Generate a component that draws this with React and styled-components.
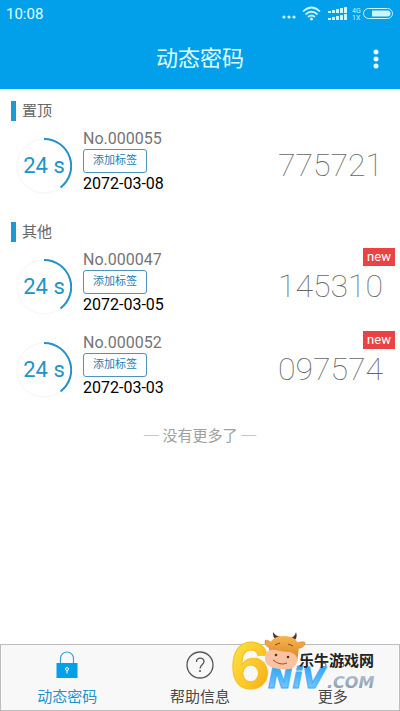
import React from "react"
import styled, { createGlobalStyle } from "styled-components"

const GlobalStyle = createGlobalStyle`
    * {
        box-sizing: border-box;
    }

    body {
        margin: 0;
        background: #fff;
        font-family: Roboto, "Noto Sans CJK SC", sans-serif;
    }

    button {
        font-family: inherit;
        cursor: pointer;
    }
`

const Page = styled.div`
    min-height: 100vh;
    display: flex;
    flex-direction: column;
`

const Header = styled.header`
    background: #029fea;
    color: #e4ffff;
`

const StatusBar = styled.div`
    height: 28px;
    padding: 0 6px;
    display: flex;
    align-items: center;
    justify-content: space-between;
    font-size: 15px;
`

const StatusIcons = styled.svg`
    display: block;
    width: 112px;
    height: 20px;
`

const TitleBar = styled.div`
    height: 61px;
    padding: 0 10px;
    display: grid;
    grid-template-columns: 28px 1fr 28px;
    align-items: center;
`

const ScreenTitle = styled.h1`
    grid-column: 2;
    margin: 0;
    text-align: center;
    font-size: 22px;
    font-weight: 400;
    line-height: 32px;
`

const MenuButton = styled.button`
    height: 32px;
    padding: 0;
    border: 0;
    background: none;
    color: inherit;

    svg {
        display: block;
        margin: 0 auto;
    }
`

const Content = styled.main`
    flex: 1;
`

const SectionTitle = styled.h2`
    margin: 0;
    padding: 12px 11px 4px;
    display: flex;
    align-items: center;
    gap: 6px;
    color: #666;
    font-size: 15px;
    font-weight: 400;
    line-height: 20px;

    &::before {
        content: "";
        width: 5px;
        height: 20px;
        background: #1f97cf;
    }
`

const TokenList = styled.ul`
    margin: 0 0 2px;
    padding: 0;
    list-style: none;
`

const TokenRow = styled.li`
    position: relative;
    height: 83px;
    padding: 0 17px 2px 16px;
    display: flex;
    align-items: center;
    gap: 11px;
`

const Timer = styled.div`
    width: 56px;
    height: 56px;
    display: grid;
    place-items: center;
    color: #2393c6;
    font-size: 22px;
    line-height: 28px;
    white-space: nowrap;

    > * {
        grid-area: 1 / 1;
    }
`

const Details = styled.div`
    flex: 1;
    display: flex;
    flex-direction: column;
    align-items: flex-start;
    padding-bottom: 7px;
`

const Serial = styled.span`
    color: #757575;
    font-size: 16px;
    line-height: 20px;
`

const TagButton = styled.button`
    width: 64px;
    height: 24px;
    padding: 0;
    border: 1px solid #4e93bb;
    border-radius: 3px;
    background: #fff;
    color: #1c7eb4;
    font-size: 11px;
    line-height: 20px;
`

const ExpireDate = styled.time`
    color: #000;
    font-size: 16px;
    line-height: 22px;
`

const Code = styled.output`
    padding-bottom: 2px;
    color: #666;
    font-size: 32px;
    font-weight: 100;
    line-height: 36px;
`

const NewBadge = styled.span`
    position: absolute;
    top: 2px;
    right: 5px;
    width: 32px;
    height: 18px;
    background: #ea4344;
    color: #fff;
    font-size: 13px;
    line-height: 18px;
    text-align: center;
`

const EndNote = styled.p`
    margin: 12px 0;
    color: #a0a0a0;
    font-size: 15px;
    line-height: 24px;
    text-align: center;
`

const TabBar = styled.nav`
    position: relative;
    height: 67px;
    display: grid;
    grid-template-columns: repeat(3, 1fr);
    border: 1px solid #bdbdbd;
    background: #f8f8f8;
`

const Tab = styled.button`
    padding: 5px 0 0;
    border: 0;
    background: none;
    display: flex;
    flex-direction: column;
    align-items: center;
    gap: 5px;
    color: ${({ $active }) => ($active ? "#1f95c9" : "#4a4a4a")};
    font-size: 15px;
    line-height: 24px;
`

const SiteLogo = styled.svg`
    position: absolute;
    right: 20px;
    bottom: 16px;
    width: 146px;
    height: 64px;
    overflow: visible;
    pointer-events: none;
`

const pinned = [{ serial: "No.000055", date: "2072-03-08", code: "775721" }]

const others = [
    { serial: "No.000047", date: "2072-03-05", code: "145310", isNew: true },
    { serial: "No.000052", date: "2072-03-03", code: "097574", isNew: true },
]

const SignalBars = ({ y }) => (
    <g>
        {[2, 3, 4, 5, 6].map((h, i) => (
            <rect key={h} x={46 + i * 4} y={y - h} width="3" height={h} />
        ))}
    </g>
)

const Status = () => (
    <StatusIcons viewBox="0 0 112 20" fill="#c9f6ff" aria-hidden="true">
        <circle cx="2" cy="13" r="1.6" />
        <circle cx="7" cy="13" r="1.6" />
        <circle cx="12" cy="13" r="1.6" />
        <g fill="none" stroke="#c9f6ff" strokeWidth="1.7">
            <path d="M21 7.500q8.500-8 17 0" />
            <path d="M23.500 10.500q6-5.500 12 0" />
            <path d="M26 13q3.500-3 7 0" />
        </g>
        <circle cx="29.500" cy="15" r="1.500" />
        <SignalBars y={9} />
        <SignalBars y={16} />
        <text x="70" y="9" fontSize="7">4G</text>
        <text x="70" y="16" fontSize="7">1X</text>
        <rect x="81.500" y="4.500" width="29" height="10" rx="5" fill="none" stroke="#c9f6ff" />
        <path d="M90 6.500h15.500a3 3 0 0 1 0 6H90z" />
    </StatusIcons>
)

const Token = ({ serial, date, code, isNew }) => (
    <TokenRow>
        <Timer>
            <svg width="56" height="56" viewBox="0 0 56 56" fill="none" aria-hidden="true">
                <circle cx="28" cy="28" r="27" stroke="#f5f5f5" />
                <path d="M28 1A27 27 0 0 1 44.500 49.500" stroke="#2393c6" strokeWidth="2" />
            </svg>
            <span>24 s</span>
        </Timer>
        <Details>
            <Serial>{serial}</Serial>
            <TagButton type="button">添加标签</TagButton>
            <ExpireDate>{date}</ExpireDate>
        </Details>
        <Code>{code}</Code>
        {isNew && <NewBadge>new</NewBadge>}
    </TokenRow>
)

const LockIcon = () => (
    <svg width="28" height="30" viewBox="0 0 28 30" aria-hidden="true">
        <path d="M7.500 14V8.500a6.500 6.500 0 0 1 13 0V14" fill="none" stroke="#3fa3d0" strokeWidth="1.200" />
        <rect x="3.500" y="13" width="21" height="15" fill="#029fea" />
        <circle cx="14" cy="19" r="1.500" fill="none" stroke="#fff" />
        <path d="M14 20.500v3" stroke="#fff" />
    </svg>
)

const HelpIcon = () => (
    <svg width="28" height="30" viewBox="0 0 28 30" fill="none" stroke="#555" strokeWidth="1.300" aria-hidden="true">
        <circle cx="14" cy="15" r="13" />
        <path d="M10.500 12c0-5 7.500-5 7.500-.5 0 3-4 3.500-4 7" />
        <path d="M14 20v2" strokeWidth="1.600" />
    </svg>
)

const MoreIcon = () => (
    <svg width="28" height="30" viewBox="0 0 28 30" fill="none" stroke="#555" aria-hidden="true">
        <circle cx="5" cy="15" r="2" />
        <circle cx="14" cy="15" r="2" />
        <circle cx="23" cy="15" r="2" />
    </svg>
)

const Logo = () => (
    <SiteLogo viewBox="0 0 146 64">
        <defs>
            <linearGradient id="gold" x1="0" y1="0" x2="1" y2="1">
                <stop offset="0" stopColor="#ffe94b" />
                <stop offset="0.6" stopColor="#fcc525" />
                <stop offset="1" stopColor="#e9a00f" />
            </linearGradient>
            <linearGradient id="sky" x1="0" y1="0" x2="0" y2="1">
                <stop offset="0" stopColor="#1d9ff5" />
                <stop offset="1" stopColor="#8ad0fc" />
            </linearGradient>
            <linearGradient id="steel" x1="0" y1="0" x2="0" y2="1">
                <stop offset="0" stopColor="#b5c4d1" />
                <stop offset="1" stopColor="#8396a6" />
            </linearGradient>
            <linearGradient id="hide" x1="0" y1="0" x2="0" y2="1">
                <stop offset="0" stopColor="#f5b652" />
                <stop offset="1" stopColor="#d98020" />
            </linearGradient>
        </defs>
        <text x="-3" y="58" fontFamily="Inter, sans-serif" fontWeight="700" fontSize="62" fill="url(#gold)" stroke="#f6bf25">6</text>
        <text x="35" y="58" fontFamily="DejaVu Sans, sans-serif" fontWeight="700" fontStyle="italic" fontSize="29" fill="url(#sky)" stroke="#41adf4">NiV</text>
        <text x="94" y="58" fontFamily="DejaVu Sans, sans-serif" fontWeight="700" fontStyle="italic" fontSize="16" fill="url(#steel)">.COM</text>
        <text x="66" y="36" fontFamily="Noto Sans CJK SC, sans-serif" fontWeight="700" fontSize="15" fill="#222">乐牛游戏网</text>
        <g>
            <path d="M44 10q-5-3-4-8 2 4 8 5zM57 8q5-1 6-6 2 6-2 9z" fill="#5a3023" />
            <path d="M39 13q-8-6-7 0 1 5 8 5zM64 13q9-3 8 1-2 5-8 4z" fill="#efa343" stroke="#c77a28" strokeWidth=".5" />
            <path d="M36 18q1-12 15-12t15 12l-2 14H36z" fill="url(#hide)" />
            <path d="M32 29q0-11 10-9 8 2 15 2 8 2 7 10-2 9-16 7-16-1-16-10z" fill="#f9c3a1" />
            <path d="M42 15l5-2M55 14l5 2" stroke="#8a4a15" />
            <circle cx="43" cy="25" r="1.300" fill="#63291c" />
            <circle cx="55" cy="27" r="1.300" fill="#63291c" />
            <path d="M40 30q7 6 14 3" fill="none" stroke="#b5442c" />
        </g>
    </SiteLogo>
)

const App = () => {
    return (
        <>
            <GlobalStyle />
            <Page>
                <Header>
                    <StatusBar>
                        <span>10:08</span>
                        <Status />
                    </StatusBar>
                    <TitleBar>
                        <ScreenTitle>动态密码</ScreenTitle>
                        <MenuButton type="button" aria-label="菜单">
                            <svg width="6" height="20" viewBox="0 0 6 20" fill="#e4ffff">
                                <circle cx="3" cy="3" r="2.500" />
                                <circle cx="3" cy="10" r="2.500" />
                                <circle cx="3" cy="17" r="2.500" />
                            </svg>
                        </MenuButton>
                    </TitleBar>
                </Header>
                <Content>
                    <SectionTitle>置顶</SectionTitle>
                    <TokenList>
                        {pinned.map((token) => <Token key={token.serial} {...token} />)}
                    </TokenList>
                    <SectionTitle>其他</SectionTitle>
                    <TokenList>
                        {others.map((token) => <Token key={token.serial} {...token} />)}
                    </TokenList>
                    <EndNote>─ 没有更多了 ─</EndNote>
                </Content>
                <TabBar>
                    <Tab type="button" $active>
                        <LockIcon />
                        动态密码
                    </Tab>
                    <Tab type="button">
                        <HelpIcon />
                        帮助信息
                    </Tab>
                    <Tab type="button">
                        <MoreIcon />
                        更多
                    </Tab>
                    <Logo />
                </TabBar>
            </Page>
        </>
    )
}

export default App
